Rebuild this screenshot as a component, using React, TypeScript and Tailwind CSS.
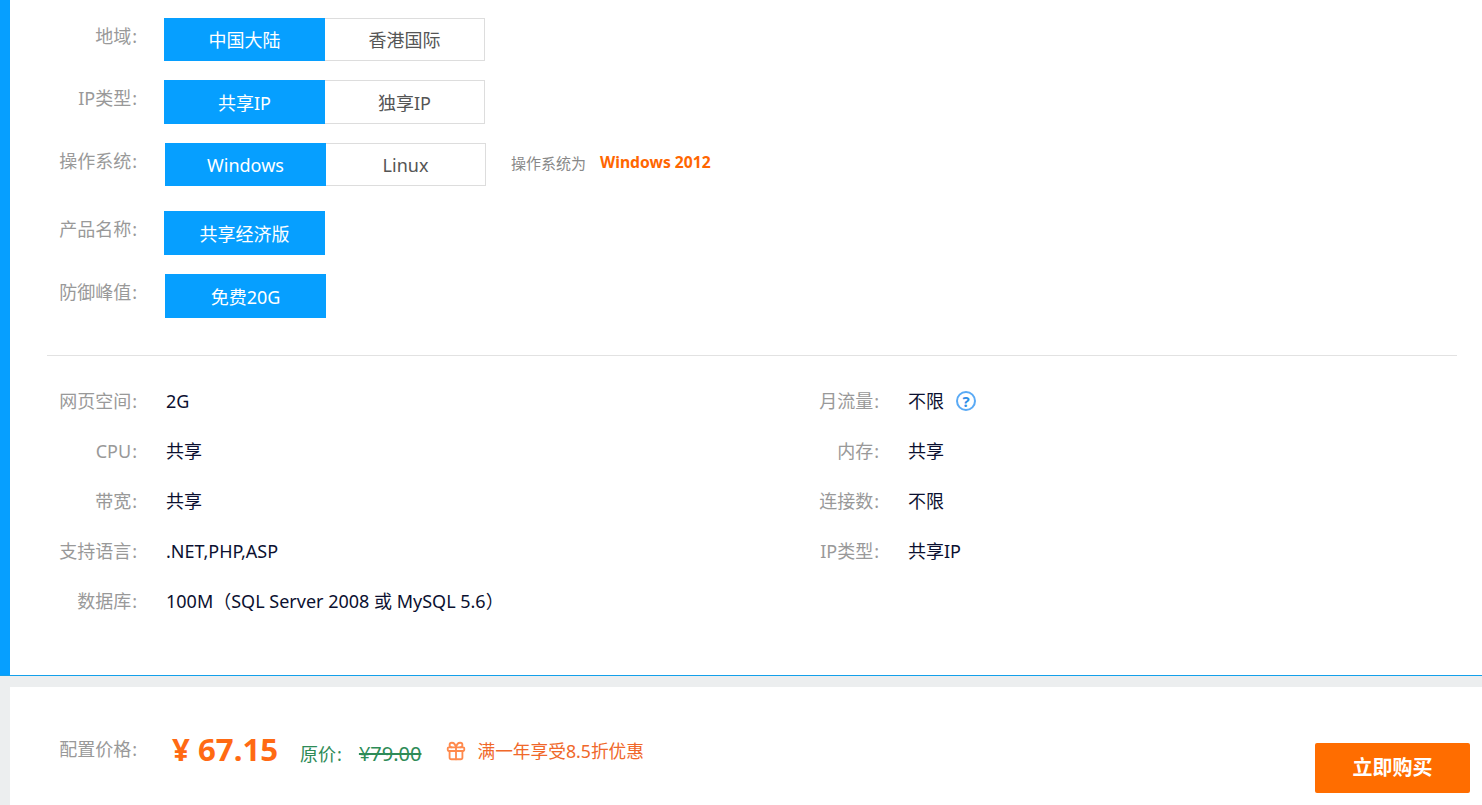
import { Gift } from 'lucide-react';

const FONT = "font-['Noto_Sans','Noto_Sans_CJK_SC',sans-serif]";

const leftSpecs = [
  { label: '网页空间', value: '2G' },
  { label: 'CPU', value: '共享' },
  { label: '带宽', value: '共享' },
  { label: '支持语言', value: '.NET,PHP,ASP' },
  { label: '数据库', value: '100M（SQL Server 2008 或 MySQL 5.6）' },
];

const rightSpecs = [
  { label: '月流量', value: '不限', help: true },
  { label: '内存', value: '共享' },
  { label: '连接数', value: '不限' },
  { label: 'IP类型', value: '共享IP' },
];

function Colon() {
  return <span className="ml-[1px]">:</span>;
}

function OptionRow({ label, options, className, tall, shift, children }: { label: string; options: string[]; className?: string; tall?: boolean; shift?: boolean; children?: React.ReactNode }) {
  const height = tall ? 'h-[44px]' : 'h-[43px]';
  return (
    <div className={`flex items-start ${className ?? ''}`}>
      <div className="w-[127px] pt-[5px] text-right text-[18px] leading-[26px] text-[#999]">{label}<Colon /></div>
      <div className={`flex ${shift ? 'ml-[28px]' : 'ml-[27px]'}`}>
        {options.map((opt, i) =>
          i === 0 ? (
            <div key={opt} className={`flex ${height} w-[161px] items-center justify-center bg-[#069fff] pt-[2px] text-[18px] text-white`}>{opt}</div>
          ) : (
            <div key={opt} className={`flex ${height} w-[160px] items-center justify-center border border-l-0 border-[#ddd] pt-[2px] text-[18px] text-[#555]`}>{opt}</div>
          )
        )}
      </div>
      {children}
    </div>
  );
}

function SpecRow({ label, value, help }: { label: string; value: string; help?: boolean }) {
  return (
    <div className="flex h-[50px] items-center">
      <div className="w-[127px] text-right text-[18px] text-[#999]">{label}<Colon /></div>
      <div className="ml-[29px] text-[18px] text-[#0b1030]">{value}</div>
      {help && (
        <div className="ml-[12px] flex h-[20px] w-[20px] items-center justify-center rounded-full border-2 border-[#5aaaf5] text-[15px] leading-none font-bold text-[#2f8fe8]">?</div>
      )}
    </div>
  );
}

export default function App() {
  return (
    <div className={`flex h-[805px] flex-col overflow-hidden bg-white ${FONT}`}>
      <div className="flex h-[675px]">
        <div className="w-[10px] bg-[#069fff]" />
        <div className="flex-1">
          <div className="pt-[18px]">
            <OptionRow label="地域" options={['中国大陆', '香港国际']} className="mb-[19px]" />
            <OptionRow label="IP类型" options={['共享IP', '独享IP']} className="mb-[19px]" tall />
            <OptionRow label="操作系统" options={['Windows', 'Linux']} className="mb-[25px]" shift>
              <div className="ml-[25px] flex items-center pt-[8px]">
                <span className="text-[15px] text-[#888]">操作系统为</span>
                <span className="ml-[14px] text-[15.7px] font-bold text-[#ff6600]">Windows 2012</span>
              </div>
            </OptionRow>
            <OptionRow label="产品名称" options={['共享经济版']} className="mb-[19px]" tall />
            <OptionRow label="防御峰值" options={['免费20G']} tall shift />
          </div>
          <div className="mt-[37px] mr-[25px] ml-[37px] border-t border-[#e2e2e2]" />
          <div className="mt-[20px] flex">
            <div className="w-[742px]">
              {leftSpecs.map((s) => (
                <SpecRow key={s.label} label={s.label} value={s.value} />
              ))}
            </div>
            <div className="flex-1">
              {rightSpecs.map((s) => (
                <SpecRow key={s.label} label={s.label} value={s.value} help={s.help} />
              ))}
            </div>
          </div>
        </div>
      </div>
      <div className="h-[1px] bg-[#14a0ea]" />
      <div className="h-[11px] bg-[#eceeef]" />
      <div className="flex flex-1">
        <div className="w-[10px] bg-[#eceeef]" />
        <div className="flex flex-1 items-start">
          <div className="w-[127px] pt-[49px] text-right text-[18px] leading-[26px] text-[#999]">配置价格<Colon /></div>
          <div className="ml-[35px] pt-[42px] text-[31.2px] leading-[40px] font-bold text-[#ff6a13]">¥ 67.15</div>
          <div className="ml-[22px] flex items-center pt-[54px] text-[#2e8b57]">
            <span className="text-[18px] leading-[26px]">原价<Colon /></span>
            <span className="ml-[17px] text-[20px] leading-[26px] line-through">¥79.00</span>
          </div>
          <div className="ml-[24px] flex items-center pt-[51px] text-[#f0682a]">
            <Gift size={22} strokeWidth={2} className="text-[#ff8a4d]" />
            <span className="ml-[10px] text-[17.7px] leading-[26px]">满一年享受8.5折优惠</span>
          </div>
          <button className="mt-[56px] mr-[12px] ml-auto flex h-[50px] w-[155px] items-center justify-center rounded-[2px] bg-[#ff6d00] text-[20px] font-bold text-white">立即购买</button>
        </div>
      </div>
    </div>
  );
}
